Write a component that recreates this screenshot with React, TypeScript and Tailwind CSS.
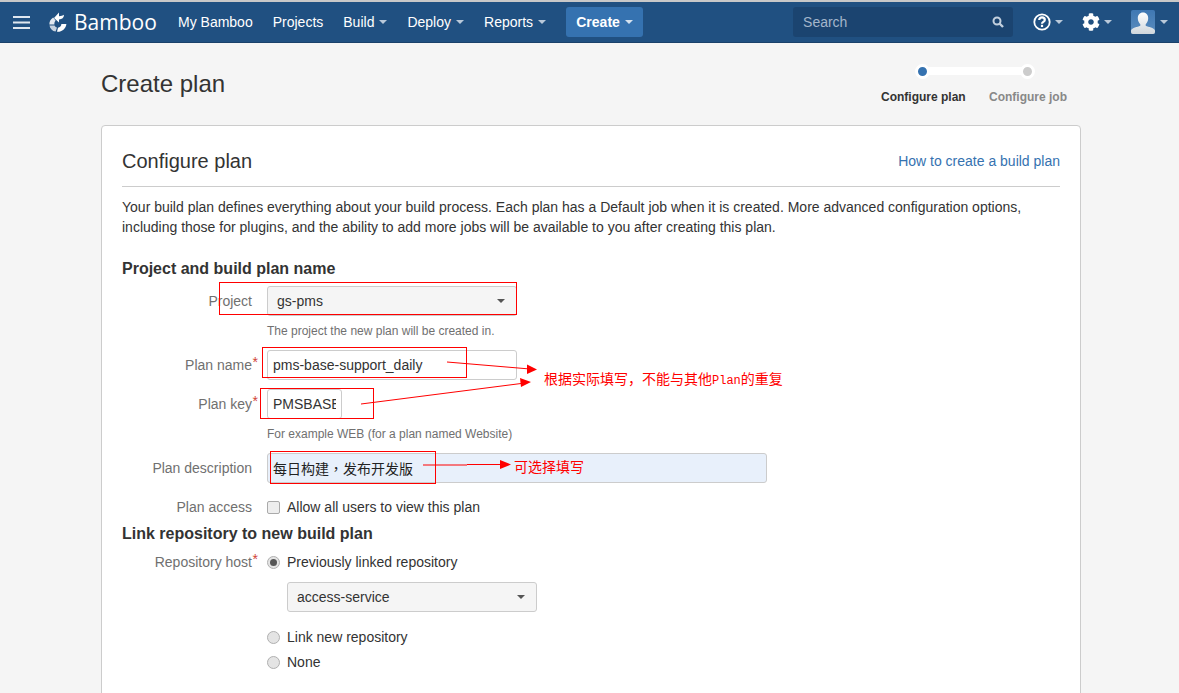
import { FaCog } from "react-icons/fa";

const sans = "font-['Liberation_Sans','Noto_Sans_CJK_SC',sans-serif]";

const Caret = ({ className = "border-t-white" }: { className?: string }) => (
  <span className={`inline-block h-0 w-0 border-x-4 border-t-4 border-x-transparent ${className}`} />
);

const NavItem = ({ label, caret }: { label: string; caret?: boolean }) => (
  <a className="flex items-center gap-[5px] text-[14px] text-white">
    {label}
    {caret && <Caret className="border-t-[#b9c9da]" />}
  </a>
);

const BambooLogo = () => (
  <svg width="18" height="20" viewBox="0 0 18 20" fill="none">
    <path d="M10 0.5 L10 4.200 C12 4 14 3.600 15 2.800 C15 5.600 13 7.400 10 7.600 L10 10.500 L5 6 Z" fill="#fff" />
    <path d="M4.200 5.400 C1.600 7 0.200 9.600 0.400 12.400 L5.400 12.400 C5.300 10.800 5.600 9.600 6.600 8.400 Z" fill="#e3e9f0" />
    <path d="M0.500 13.400 C1 16.400 3.400 19 6.600 19.600 L8 15.400 C6.800 15 6 14.400 5.600 13.400 Z" fill="#c6d2df" />
    <path d="M9 15.800 L8 19.800 C12.600 20.200 16.800 17 17.400 12 L12.400 12 C12.200 14 11 15.400 9 15.800 Z" fill="#fff" />
  </svg>
);

const TopBar = () => (
  <header className="h-[43px] border-t-2 border-b border-t-[#c8c8c8] border-b-[#1a416a] bg-[#205081] flex items-center">
    <svg width="17" height="13" viewBox="0 0 17 13" className="ml-[13px] shrink-0">
      <path d="M0 1h17M0 6.500h17M0 12h17" stroke="#dfe7f0" strokeWidth="2" />
    </svg>
    <div className="ml-[19px] flex w-[129px] items-center gap-[7px]">
      <BambooLogo />
      <span className="text-[21px] leading-none text-white font-['Open_Sans','Liberation_Sans',sans-serif]">Bamboo</span>
    </div>
    <nav className="flex items-center gap-[20px]">
      <NavItem label="My Bamboo" />
      <NavItem label="Projects" />
      <NavItem label="Build" caret />
      <NavItem label="Deploy" caret />
      <NavItem label="Reports" caret />
    </nav>
    <button className="ml-[20px] h-[30px] w-[77px] rounded-[3px] bg-[#3572b0] flex items-center justify-center gap-[5px] text-[14px] font-bold text-white">
      Create <Caret className="border-t-[#d5e2ef]" />
    </button>
    <div className="ml-[150px] h-[30px] w-[220px] rounded-[3px] bg-[#1b4470] flex items-center justify-between pl-[10px] pr-[9px]">
      <span className="text-[14px] text-[#a3b6cb]">Search</span>
      <svg width="12" height="12" viewBox="0 0 12 12" fill="none">
        <circle cx="5" cy="5" r="3.500" stroke="#c3d0de" strokeWidth="2" />
        <path d="M7.500 7.500L11 11" stroke="#c3d0de" strokeWidth="2.400" />
      </svg>
    </div>
    <div className="ml-[20px] flex items-center gap-[4px]">
      <svg width="18" height="18" viewBox="0 0 18 18" fill="none">
        <circle cx="9" cy="9" r="7.700" stroke="#fff" strokeWidth="1.800" />
        <path d="M6.200 7c0-1.800 1.200-2.700 2.800-2.700S11.800 5.200 11.800 6.900c0 2-2.800 2-2.800 3.800" stroke="#fff" strokeWidth="2.200" />
        <rect x="7.900" y="11.800" width="2.200" height="2.200" fill="#fff" />
      </svg>
      <Caret className="border-t-[#b9c9da]" />
    </div>
    <div className="ml-[19px] flex items-center gap-[4px]">
      <FaCog className="h-[18px] w-[18px] text-white" />
      <Caret className="border-t-[#b9c9da]" />
    </div>
    <div className="ml-[19px] flex items-center gap-[5px]">
      <div className="h-[24px] w-[24px] overflow-hidden rounded-[2px] bg-gradient-to-b from-[#3f78b3] to-[#5a8cbd]">
        <svg width="24" height="24" viewBox="0 0 24 24">
          <defs>
            <linearGradient id="userFill" x1="0" y1="0" x2="0" y2="1">
              <stop offset="0" stopColor="#ffffff" />
              <stop offset="1" stopColor="#cfd6dc" />
            </linearGradient>
          </defs>
          <path d="M12 2.500c3.300 0 5.200 2.500 5.200 5.700 0 2.400-1 4.600-2.500 6v1.600c2.800 1.300 8.300 2 9.300 4.700V24H0v-3.500c1-2.700 6.500-3.400 9.300-4.700v-1.600c-1.500-1.400-2.500-3.600-2.500-6C6.800 5 8.700 2.500 12 2.500z" fill="url(#userFill)" />
        </svg>
      </div>
      <Caret className="border-t-[#b9c9da]" />
    </div>
  </header>
);

const Stepper = () => (
  <div className="w-[186px] pt-[21px]">
    <div className="relative ml-[34px] h-[15px] w-[120px]">
      <div className="absolute left-[6px] right-[6px] top-[3px] h-[8px] bg-white" />
      <span className="absolute left-0 top-0 h-[15px] w-[15px] rounded-full border-[3px] border-white bg-[#3572b0]" />
      <span className="absolute right-0 top-0 h-[15px] w-[15px] rounded-full border-[3px] border-white bg-[#ccc]" />
    </div>
    <div className="mt-[9px] flex justify-between text-[12px] font-bold">
      <span className="text-[#333]">Configure plan</span>
      <span className="text-[#888]">Configure job</span>
    </div>
  </div>
);

const Row = ({ label, req, children, className = "" }: { label: string; req?: boolean; children: React.ReactNode; className?: string }) => (
  <div className={`flex ${className}`}>
    <label className="relative w-[130px] shrink-0 text-right text-[14px] leading-[20px] text-[#707070]">
      {label}
      {req && <span className="absolute -right-[6px] -top-[3px] text-[14px] text-[#d04437]">*</span>}
    </label>
    <div className="ml-[15px] min-w-0 flex-1">{children}</div>
  </div>
);

const SelectBox = ({ value }: { value: string }) => (
  <div className="h-[30px] w-[250px] rounded-[3px] border border-[#ccc] bg-[#f5f5f5] flex items-center justify-between pl-[9px] pr-[11px] text-[14px] text-[#333]">
    {value}
    <Caret className="border-t-[#555]" />
  </div>
);

const Radio = ({ checked }: { checked?: boolean }) => (
  <span className="flex h-[13px] w-[13px] items-center justify-center rounded-full border border-[#b0b0b0] bg-[#e4e4e4]">
    {checked && <span className="h-[7px] w-[7px] rounded-full bg-[#555]" />}
  </span>
);

const Annotations = () => (
  <>
    {/* red boxes drawn over the screenshot */}
    <div className="absolute left-[219px] top-[282px] h-[33px] w-[298px] border border-[#ff0000]" />
    <div className="absolute left-[262px] top-[347px] h-[31px] w-[205px] border border-[#ff0000]" />
    <div className="absolute left-[260px] top-[388px] h-[31px] w-[114px] border border-[#ff0000]" />
    <div className="absolute left-[270px] top-[451px] h-[33px] w-[166px] border border-[#ff0000]" />
    <svg className="absolute left-0 top-0" width="1179" height="693" fill="none">
      <path d="M447 362L530 369" stroke="#ff0000" />
      <path d="M527 364.500L537 369.500L527 374Z" fill="#ff0000" />
      <path d="M361 404L525 383" stroke="#ff0000" />
      <path d="M520 378L531 382L521 387Z" fill="#ff0000" />
      <path d="M423 465H467M467 464.500H503" stroke="#ff0000" />
      <path d="M500 460L511 464.500L500 469Z" fill="#ff0000" />
    </svg>
    <span className="absolute left-[544px] top-[369px] text-[14px] leading-[18px] text-[#ff0000] font-['Noto_Sans_CJK_SC',serif]">
      根据实际填写，不能与其他<span className="font-['Liberation_Mono',monospace] text-[12px]">Plan</span>的重复
    </span>
    <span className="absolute left-[514px] top-[457px] text-[14px] leading-[18px] text-[#ff0000] font-['Noto_Sans_CJK_SC',serif]">可选择填写</span>
  </>
);

export default function App() {
  return (
    <div className={`relative h-[693px] overflow-hidden bg-[#f5f5f5] ${sans}`}>
      <TopBar />
      <div className="mx-[101px] w-[980px]">
        <div className="flex h-[82px] justify-between pr-[14px]">
          <h1 className="pt-[25px] text-[24px] leading-[32px] text-[#333]">Create plan</h1>
          <Stepper />
        </div>
        <main className="h-[600px] rounded-[4px] border border-[#ccc] bg-white px-[20px] pt-[20px]">
          <div className="flex items-center justify-between border-b border-[#ccc] pb-[10px]">
            <h2 className="text-[20px] leading-[30px] text-[#333]">Configure plan</h2>
            <a className="text-[14px] text-[#3572b0]">How to create a build plan</a>
          </div>
          <p className="mt-[10px] text-[14px] leading-[20px] text-[#333]">
            Your build plan defines everything about your build process. Each plan has a Default job when it is created. More advanced configuration options,
            <br />
            including those for plugins, and the ability to add more jobs will be available to you after creating this plan.
          </p>
          <h3 className="mt-[22px] text-[16px] font-bold leading-[20px] text-[#333]">Project and build plan name</h3>
          <Row label="Project" className="mt-[7px] items-center">
            <SelectBox value="gs-pms" />
          </Row>
          <div className="mt-[7px] pl-[145px] text-[12px] leading-[17px] text-[#707070]">The project the new plan will be created in.</div>
          <Row label="Plan name" req className="mt-[10px] items-center">
            <div className="h-[30px] w-[250px] rounded-[3px] border border-[#ccc] bg-white pl-[5px] text-[14px] leading-[28px] text-[#333]">pms-base-support_daily</div>
          </Row>
          <Row label="Plan key" req className="mt-[9px] items-center">
            <div className="h-[30px] w-[75px] whitespace-nowrap rounded-[3px] border border-[#ccc] bg-white px-[5px] text-[14px] leading-[28px] text-[#333]">
              <div className="overflow-hidden">PMSBASESUPPORT</div>
            </div>
          </Row>
          <div className="mt-[7px] pl-[145px] text-[12px] leading-[17px] text-[#707070]">For example WEB (for a plan named Website)</div>
          <Row label="Plan description" className="mt-[10px] items-center">
            <div className="h-[30px] w-[500px] rounded-[3px] border border-[#ccc] bg-[#e8f0fb] pl-[5px] text-[14px] leading-[28px] text-[#222] font-['Noto_Sans_CJK_TC',sans-serif]">每日构建，发布开发版</div>
          </Row>
          <Row label="Plan access" className="mt-[14px]">
            <label className="flex items-center gap-[7px] text-[14px] leading-[20px] text-[#333]">
              <span className="h-[13px] w-[13px] rounded-[2px] border border-[#aaa] bg-[#eee]" />
              Allow all users to view this plan
            </label>
          </Row>
          <h3 className="mt-[7px] text-[16px] font-bold leading-[20px] text-[#333]">Link repository to new build plan</h3>
          <Row label="Repository host" req className="mt-[8px]">
            <div className="flex items-center gap-[7px] text-[14px] leading-[20px] text-[#333]">
              <Radio checked />
              Previously linked repository
            </div>
            <div className="ml-[20px] mt-[10px]">
              <SelectBox value="access-service" />
            </div>
            <div className="mt-[15px] flex items-center gap-[7px] text-[14px] leading-[20px] text-[#333]">
              <Radio />
              Link new repository
            </div>
            <div className="mt-[5px] flex items-center gap-[7px] text-[14px] leading-[20px] text-[#333]">
              <Radio />
              None
            </div>
          </Row>
        </main>
      </div>
      <Annotations />
    </div>
  );
}
